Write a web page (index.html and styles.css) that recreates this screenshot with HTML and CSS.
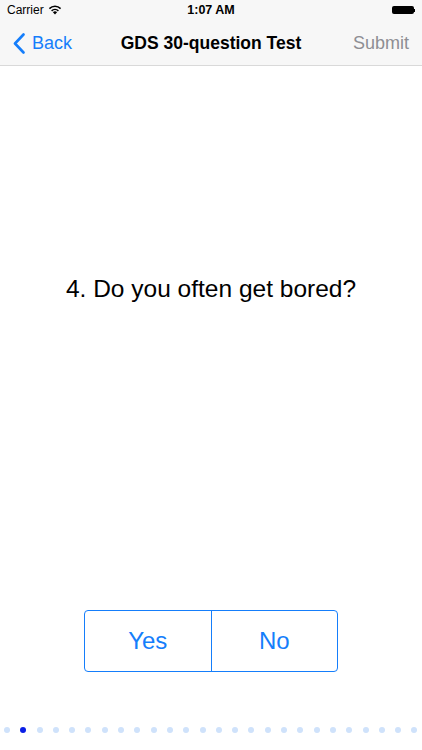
FILE: index.html
```html
<!DOCTYPE html>
<html lang="en">
<head>
    <meta charset="UTF-8">
    <meta name="viewport" content="width=device-width, initial-scale=1.0">
    <title>GDS 30-question Test</title>
    <link rel="stylesheet" href="styles.css">
</head>
<body>
    <div class="top">
        <div class="statusbar">
            <div class="carrier">Carrier
                <svg class="wifi" width="14" height="10" viewBox="0 0 14 10">
                    <path d="M7 9.6 L4.9 7.3 A3 3 0 0 1 9.1 7.3 Z" fill="#000"/>
                    <path d="M3.6 5.9 A4.9 4.9 0 0 1 10.4 5.9" stroke="#000" stroke-width="1.5" fill="none"/>
                    <path d="M1.4 3.6 A8 8 0 0 1 12.6 3.6" stroke="#000" stroke-width="1.5" fill="none"/>
                </svg>
            </div>
            <div class="time">1:07 AM</div>
            <div class="battery"><span class="cell"></span><span class="tip"></span></div>
        </div>
        <div class="navbar">
            <a class="back">
                <svg width="13" height="21" viewBox="0 0 13 21">
                    <path d="M10.5 1.5 L2 10.5 L10.5 19.5" stroke="#157efb" stroke-width="2.6" fill="none" stroke-linecap="round" stroke-linejoin="round"/>
                </svg>
                Back
            </a>
            <div class="title">GDS 30-question Test</div>
            <a class="submit">Submit</a>
        </div>
    </div>

    <div class="question">4. Do you often get bored?</div>

    <div class="answers">
        <button class="answer">Yes</button>
        <button class="answer">No</button>
    </div>

    <div class="dots">
        <span class="dot"></span>
        <span class="dot active"></span>
        <span class="dot"></span>
        <span class="dot"></span>
        <span class="dot"></span>
        <span class="dot"></span>
        <span class="dot"></span>
        <span class="dot"></span>
        <span class="dot"></span>
        <span class="dot"></span>
        <span class="dot"></span>
        <span class="dot"></span>
        <span class="dot"></span>
        <span class="dot"></span>
        <span class="dot"></span>
        <span class="dot"></span>
        <span class="dot"></span>
        <span class="dot"></span>
        <span class="dot"></span>
        <span class="dot"></span>
        <span class="dot"></span>
        <span class="dot"></span>
        <span class="dot"></span>
        <span class="dot"></span>
        <span class="dot"></span>
        <span class="dot"></span>
    </div>
</body>
</html>
```

FILE: styles.css
```css
body{
    margin: 0;
    width: 422px;
    height: 750px;
    overflow: hidden;
    font-family: "Liberation Sans", Arial, sans-serif;
    background-color: #fff;
    color: #000;
}
.top{
    background-color: #f7f7f7;
    border-bottom: 1px solid #d9d9d9;
}
.statusbar{
    height: 20px;
    display: flex;
    align-items: center;
    justify-content: space-between;
    padding: 0 7px;
    font-size: 12px;
}
.carrier{
    display: flex;
    align-items: center;
    gap: 4px;
    width: 90px;
}
.time{
    font-weight: bold;
    font-size: 12.5px;
}
.battery{
    width: 90px;
    display: flex;
    justify-content: flex-end;
    align-items: center;
}
.cell{
    width: 22px;
    height: 8px;
    background-color: #000;
    border-radius: 2px;
}
.tip{
    width: 1.5px;
    height: 3px;
    background-color: #000;
}
.navbar{
    height: 45px;
    display: flex;
    align-items: center;
    justify-content: space-between;
    padding: 2px 13px 0 13px;
    box-sizing: border-box;
}
.back{
    display: flex;
    align-items: center;
    gap: 6px;
    color: #157efb;
    font-size: 18px;
    width: 90px;
}
.title{
    font-weight: bold;
    font-size: 17.5px;
}
.submit{
    width: 90px;
    text-align: right;
    color: #8e8e93;
    font-size: 18px;
}
.question{
    margin-top: 209px;
    text-align: center;
    font-size: 24.5px;
}
.answers{
    display: flex;
    width: 252px;
    height: 60px;
    margin: 307px auto 0;
    border: 1px solid #157efb;
    border-radius: 4px;
}
.answer{
    flex: 1;
    border: none;
    background: none;
    color: #157efb;
    font-family: "Liberation Sans", Arial, sans-serif;
    font-size: 24px;
    padding: 0;
}
.answer + .answer{
    border-left: 1px solid #157efb;
}
.dots{
    display: flex;
    gap: 10.3px;
    padding-left: 4px;
    margin-top: 55px;
}
.dot{
    width: 6px;
    height: 6px;
    border-radius: 50%;
    background-color: #cfe2fb;
    flex-shrink: 0;
}
.dot.active{
    background-color: #0a1ee6;
}
```
